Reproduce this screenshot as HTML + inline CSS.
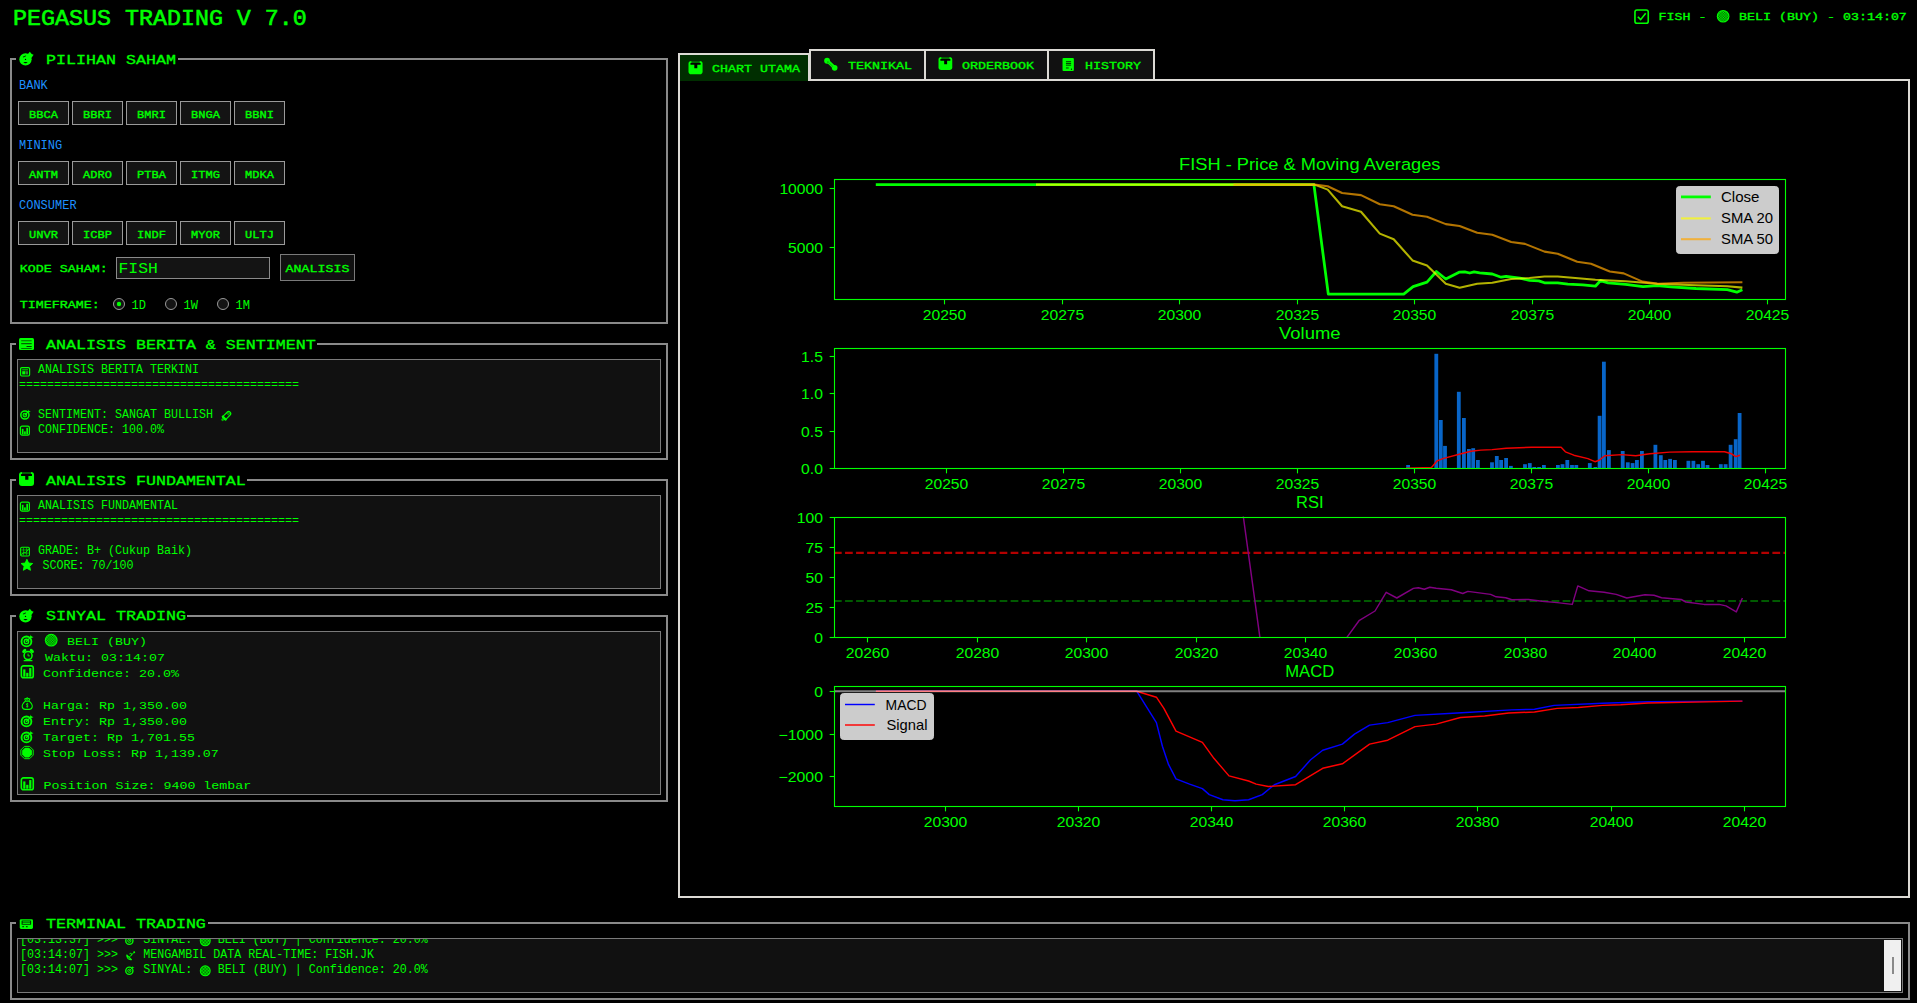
<!DOCTYPE html>
<html><head><meta charset="utf-8"><title>Pegasus Trading</title>
<style>html,body{margin:0;padding:0;background:#000;overflow:hidden}svg{display:block}</style></head>
<body><svg width="1917" height="1003" viewBox="0 0 1917 1003" shape-rendering="auto">
<defs><pattern id="hatch" width="2" height="2" patternUnits="userSpaceOnUse"><rect width="2" height="2" fill="#00ff00"/><rect width="1" height="1" fill="#006000"/><rect x="1" y="1" width="1" height="1" fill="#006000"/></pattern></defs>
<rect width="1917" height="1003" fill="#000"/>
<text x="13" y="25" font-family="'Liberation Mono', monospace" font-size="23.33" font-weight="normal" fill="#00ff00" xml:space="preserve" transform="translate(0 25) scale(1 0.93) translate(0 -25)"  stroke="#00ff00" stroke-width="0.6">PEGASUS TRADING V 7.0</text>
<g transform="translate(1634.00,9.00) scale(0.950)"><rect x="1" y="1" width="14" height="14" rx="2.2" fill="none" stroke="#00ff00" stroke-width="1.7"/><path d="M4 8.2 L7 11.2 L12.3 4.5" fill="none" stroke="#00ff00" stroke-width="1.7"/></g>
<text x="1658.5" y="20.5" font-family="'Liberation Mono', monospace" font-size="13.33" font-weight="normal" fill="#00ff00" xml:space="preserve" transform="translate(0 20.5) scale(1 0.88) translate(0 -20.5)"  stroke="#00ff00" stroke-width="0.4">FISH -</text>
<g transform="translate(1716.50,9.60) scale(0.830)"><circle cx="8" cy="8" r="7.6" fill="#00ff00"/><circle cx="8" cy="8" r="6.4" fill="url(#hatch)"/></g>
<text x="1739" y="20.5" font-family="'Liberation Mono', monospace" font-size="13.33" font-weight="normal" fill="#00ff00" xml:space="preserve" transform="translate(0 20.5) scale(1 0.88) translate(0 -20.5)"  stroke="#00ff00" stroke-width="0.4">BELI (BUY) - 03:14:07</text>
<rect x="10" y="58" width="658" height="2" fill="#8a8a8a"/>
<rect x="10" y="322" width="658" height="2" fill="#8a8a8a"/>
<rect x="10" y="58" width="2" height="266" fill="#8a8a8a"/>
<rect x="666" y="58" width="2" height="266" fill="#8a8a8a"/>
<rect x="16" y="57" width="162" height="4" fill="#000"/>
<g transform="translate(18.80,50.50) scale(0.950)"><circle cx="7.05" cy="9.3" r="6.5" fill="#00ff00"/><ellipse cx="6.0" cy="6.3" rx="1.9" ry="0.65" transform="rotate(-20 6 6.3)" fill="#003a00"/><ellipse cx="7.05" cy="12.7" rx="2.1" ry="0.6" fill="#000"/><circle cx="7.05" cy="9.4" r="0.7" fill="#000"/><polygon points="9.2,4.2 11.6,1.3 13.6,3.6 15.6,4.6 13.4,7.6 10.4,7.4" fill="#00ff00"/></g>
<text x="46" y="64" font-family="'Liberation Mono', monospace" font-size="16.67" font-weight="normal" fill="#00ff00" xml:space="preserve" transform="translate(0 64) scale(1 0.8) translate(0 -64)"  stroke="#00ff00" stroke-width="0.4">PILIHAN SAHAM</text>
<text x="19" y="89" font-family="'Liberation Mono', monospace" font-size="12" font-weight="normal" fill="#1e90ff" xml:space="preserve" >BANK</text>
<rect x="18" y="101" width="51" height="24" fill="#141414"/>
<rect x="18" y="101" width="51" height="1" fill="#9a9a9a"/>
<rect x="18" y="124" width="51" height="1" fill="#9a9a9a"/>
<rect x="18" y="101" width="1" height="24" fill="#9a9a9a"/>
<rect x="68" y="101" width="1" height="24" fill="#9a9a9a"/>
<text x="43.5" y="118" font-family="'Liberation Mono', monospace" font-size="12" font-weight="normal" fill="#00ff00" xml:space="preserve" transform="translate(0 118) scale(1 0.92) translate(0 -118)" text-anchor="middle" stroke="#00ff00" stroke-width="0.4">BBCA</text>
<rect x="72" y="101" width="51" height="24" fill="#141414"/>
<rect x="72" y="101" width="51" height="1" fill="#9a9a9a"/>
<rect x="72" y="124" width="51" height="1" fill="#9a9a9a"/>
<rect x="72" y="101" width="1" height="24" fill="#9a9a9a"/>
<rect x="122" y="101" width="1" height="24" fill="#9a9a9a"/>
<text x="97.5" y="118" font-family="'Liberation Mono', monospace" font-size="12" font-weight="normal" fill="#00ff00" xml:space="preserve" transform="translate(0 118) scale(1 0.92) translate(0 -118)" text-anchor="middle" stroke="#00ff00" stroke-width="0.4">BBRI</text>
<rect x="126" y="101" width="51" height="24" fill="#141414"/>
<rect x="126" y="101" width="51" height="1" fill="#9a9a9a"/>
<rect x="126" y="124" width="51" height="1" fill="#9a9a9a"/>
<rect x="126" y="101" width="1" height="24" fill="#9a9a9a"/>
<rect x="176" y="101" width="1" height="24" fill="#9a9a9a"/>
<text x="151.5" y="118" font-family="'Liberation Mono', monospace" font-size="12" font-weight="normal" fill="#00ff00" xml:space="preserve" transform="translate(0 118) scale(1 0.92) translate(0 -118)" text-anchor="middle" stroke="#00ff00" stroke-width="0.4">BMRI</text>
<rect x="180" y="101" width="51" height="24" fill="#141414"/>
<rect x="180" y="101" width="51" height="1" fill="#9a9a9a"/>
<rect x="180" y="124" width="51" height="1" fill="#9a9a9a"/>
<rect x="180" y="101" width="1" height="24" fill="#9a9a9a"/>
<rect x="230" y="101" width="1" height="24" fill="#9a9a9a"/>
<text x="205.5" y="118" font-family="'Liberation Mono', monospace" font-size="12" font-weight="normal" fill="#00ff00" xml:space="preserve" transform="translate(0 118) scale(1 0.92) translate(0 -118)" text-anchor="middle" stroke="#00ff00" stroke-width="0.4">BNGA</text>
<rect x="234" y="101" width="51" height="24" fill="#141414"/>
<rect x="234" y="101" width="51" height="1" fill="#9a9a9a"/>
<rect x="234" y="124" width="51" height="1" fill="#9a9a9a"/>
<rect x="234" y="101" width="1" height="24" fill="#9a9a9a"/>
<rect x="284" y="101" width="1" height="24" fill="#9a9a9a"/>
<text x="259.5" y="118" font-family="'Liberation Mono', monospace" font-size="12" font-weight="normal" fill="#00ff00" xml:space="preserve" transform="translate(0 118) scale(1 0.92) translate(0 -118)" text-anchor="middle" stroke="#00ff00" stroke-width="0.4">BBNI</text>
<text x="19" y="149" font-family="'Liberation Mono', monospace" font-size="12" font-weight="normal" fill="#1e90ff" xml:space="preserve" >MINING</text>
<rect x="18" y="161" width="51" height="24" fill="#141414"/>
<rect x="18" y="161" width="51" height="1" fill="#9a9a9a"/>
<rect x="18" y="184" width="51" height="1" fill="#9a9a9a"/>
<rect x="18" y="161" width="1" height="24" fill="#9a9a9a"/>
<rect x="68" y="161" width="1" height="24" fill="#9a9a9a"/>
<text x="43.5" y="178" font-family="'Liberation Mono', monospace" font-size="12" font-weight="normal" fill="#00ff00" xml:space="preserve" transform="translate(0 178) scale(1 0.92) translate(0 -178)" text-anchor="middle" stroke="#00ff00" stroke-width="0.4">ANTM</text>
<rect x="72" y="161" width="51" height="24" fill="#141414"/>
<rect x="72" y="161" width="51" height="1" fill="#9a9a9a"/>
<rect x="72" y="184" width="51" height="1" fill="#9a9a9a"/>
<rect x="72" y="161" width="1" height="24" fill="#9a9a9a"/>
<rect x="122" y="161" width="1" height="24" fill="#9a9a9a"/>
<text x="97.5" y="178" font-family="'Liberation Mono', monospace" font-size="12" font-weight="normal" fill="#00ff00" xml:space="preserve" transform="translate(0 178) scale(1 0.92) translate(0 -178)" text-anchor="middle" stroke="#00ff00" stroke-width="0.4">ADRO</text>
<rect x="126" y="161" width="51" height="24" fill="#141414"/>
<rect x="126" y="161" width="51" height="1" fill="#9a9a9a"/>
<rect x="126" y="184" width="51" height="1" fill="#9a9a9a"/>
<rect x="126" y="161" width="1" height="24" fill="#9a9a9a"/>
<rect x="176" y="161" width="1" height="24" fill="#9a9a9a"/>
<text x="151.5" y="178" font-family="'Liberation Mono', monospace" font-size="12" font-weight="normal" fill="#00ff00" xml:space="preserve" transform="translate(0 178) scale(1 0.92) translate(0 -178)" text-anchor="middle" stroke="#00ff00" stroke-width="0.4">PTBA</text>
<rect x="180" y="161" width="51" height="24" fill="#141414"/>
<rect x="180" y="161" width="51" height="1" fill="#9a9a9a"/>
<rect x="180" y="184" width="51" height="1" fill="#9a9a9a"/>
<rect x="180" y="161" width="1" height="24" fill="#9a9a9a"/>
<rect x="230" y="161" width="1" height="24" fill="#9a9a9a"/>
<text x="205.5" y="178" font-family="'Liberation Mono', monospace" font-size="12" font-weight="normal" fill="#00ff00" xml:space="preserve" transform="translate(0 178) scale(1 0.92) translate(0 -178)" text-anchor="middle" stroke="#00ff00" stroke-width="0.4">ITMG</text>
<rect x="234" y="161" width="51" height="24" fill="#141414"/>
<rect x="234" y="161" width="51" height="1" fill="#9a9a9a"/>
<rect x="234" y="184" width="51" height="1" fill="#9a9a9a"/>
<rect x="234" y="161" width="1" height="24" fill="#9a9a9a"/>
<rect x="284" y="161" width="1" height="24" fill="#9a9a9a"/>
<text x="259.5" y="178" font-family="'Liberation Mono', monospace" font-size="12" font-weight="normal" fill="#00ff00" xml:space="preserve" transform="translate(0 178) scale(1 0.92) translate(0 -178)" text-anchor="middle" stroke="#00ff00" stroke-width="0.4">MDKA</text>
<text x="19" y="209" font-family="'Liberation Mono', monospace" font-size="12" font-weight="normal" fill="#1e90ff" xml:space="preserve" >CONSUMER</text>
<rect x="18" y="221" width="51" height="24" fill="#141414"/>
<rect x="18" y="221" width="51" height="1" fill="#9a9a9a"/>
<rect x="18" y="244" width="51" height="1" fill="#9a9a9a"/>
<rect x="18" y="221" width="1" height="24" fill="#9a9a9a"/>
<rect x="68" y="221" width="1" height="24" fill="#9a9a9a"/>
<text x="43.5" y="238" font-family="'Liberation Mono', monospace" font-size="12" font-weight="normal" fill="#00ff00" xml:space="preserve" transform="translate(0 238) scale(1 0.92) translate(0 -238)" text-anchor="middle" stroke="#00ff00" stroke-width="0.4">UNVR</text>
<rect x="72" y="221" width="51" height="24" fill="#141414"/>
<rect x="72" y="221" width="51" height="1" fill="#9a9a9a"/>
<rect x="72" y="244" width="51" height="1" fill="#9a9a9a"/>
<rect x="72" y="221" width="1" height="24" fill="#9a9a9a"/>
<rect x="122" y="221" width="1" height="24" fill="#9a9a9a"/>
<text x="97.5" y="238" font-family="'Liberation Mono', monospace" font-size="12" font-weight="normal" fill="#00ff00" xml:space="preserve" transform="translate(0 238) scale(1 0.92) translate(0 -238)" text-anchor="middle" stroke="#00ff00" stroke-width="0.4">ICBP</text>
<rect x="126" y="221" width="51" height="24" fill="#141414"/>
<rect x="126" y="221" width="51" height="1" fill="#9a9a9a"/>
<rect x="126" y="244" width="51" height="1" fill="#9a9a9a"/>
<rect x="126" y="221" width="1" height="24" fill="#9a9a9a"/>
<rect x="176" y="221" width="1" height="24" fill="#9a9a9a"/>
<text x="151.5" y="238" font-family="'Liberation Mono', monospace" font-size="12" font-weight="normal" fill="#00ff00" xml:space="preserve" transform="translate(0 238) scale(1 0.92) translate(0 -238)" text-anchor="middle" stroke="#00ff00" stroke-width="0.4">INDF</text>
<rect x="180" y="221" width="51" height="24" fill="#141414"/>
<rect x="180" y="221" width="51" height="1" fill="#9a9a9a"/>
<rect x="180" y="244" width="51" height="1" fill="#9a9a9a"/>
<rect x="180" y="221" width="1" height="24" fill="#9a9a9a"/>
<rect x="230" y="221" width="1" height="24" fill="#9a9a9a"/>
<text x="205.5" y="238" font-family="'Liberation Mono', monospace" font-size="12" font-weight="normal" fill="#00ff00" xml:space="preserve" transform="translate(0 238) scale(1 0.92) translate(0 -238)" text-anchor="middle" stroke="#00ff00" stroke-width="0.4">MYOR</text>
<rect x="234" y="221" width="51" height="24" fill="#141414"/>
<rect x="234" y="221" width="51" height="1" fill="#9a9a9a"/>
<rect x="234" y="244" width="51" height="1" fill="#9a9a9a"/>
<rect x="234" y="221" width="1" height="24" fill="#9a9a9a"/>
<rect x="284" y="221" width="1" height="24" fill="#9a9a9a"/>
<text x="259.5" y="238" font-family="'Liberation Mono', monospace" font-size="12" font-weight="normal" fill="#00ff00" xml:space="preserve" transform="translate(0 238) scale(1 0.92) translate(0 -238)" text-anchor="middle" stroke="#00ff00" stroke-width="0.4">ULTJ</text>
<text x="19.7" y="272" font-family="'Liberation Mono', monospace" font-size="13.33" font-weight="normal" fill="#00ff00" xml:space="preserve" transform="translate(0 272) scale(1 0.88) translate(0 -272)"  stroke="#00ff00" stroke-width="0.4">KODE SAHAM:</text>
<rect x="116" y="257" width="154" height="22" fill="#141414"/>
<rect x="116" y="257" width="154" height="1" fill="#8a8a8a"/>
<rect x="116" y="278" width="154" height="1" fill="#8a8a8a"/>
<rect x="116" y="257" width="1" height="22" fill="#8a8a8a"/>
<rect x="269" y="257" width="1" height="22" fill="#8a8a8a"/>
<text x="118.5" y="273" font-family="'Liberation Mono', monospace" font-size="16.4" font-weight="normal" fill="#00ff00" xml:space="preserve" transform="translate(0 273) scale(1 0.86) translate(0 -273)" >FISH</text>
<rect x="280" y="254" width="75" height="27" fill="#111"/>
<rect x="280" y="254" width="75" height="1" fill="#7a7a7a"/>
<rect x="280" y="280" width="75" height="1" fill="#7a7a7a"/>
<rect x="280" y="254" width="1" height="27" fill="#7a7a7a"/>
<rect x="354" y="254" width="1" height="27" fill="#7a7a7a"/>
<text x="285.5" y="272" font-family="'Liberation Mono', monospace" font-size="13.33" font-weight="normal" fill="#00ff00" xml:space="preserve" transform="translate(0 272) scale(1 0.88) translate(0 -272)"  stroke="#00ff00" stroke-width="0.4">ANALISIS</text>
<text x="19.7" y="308" font-family="'Liberation Mono', monospace" font-size="13.33" font-weight="normal" fill="#00ff00" xml:space="preserve" transform="translate(0 308) scale(1 0.88) translate(0 -308)"  stroke="#00ff00" stroke-width="0.4">TIMEFRAME:</text>
<circle cx="119.0" cy="304" r="5.5" fill="#141414" stroke="#9a9a9a" stroke-width="1"/>
<circle cx="119.0" cy="304" r="2.2" fill="#00ff00"/>
<text x="131.5" y="309" font-family="'Liberation Mono', monospace" font-size="12" font-weight="normal" fill="#00ff00" xml:space="preserve" >1D</text>
<circle cx="171.0" cy="304" r="5.5" fill="#141414" stroke="#9a9a9a" stroke-width="1"/>
<text x="183.5" y="309" font-family="'Liberation Mono', monospace" font-size="12" font-weight="normal" fill="#00ff00" xml:space="preserve" >1W</text>
<circle cx="223.0" cy="304" r="5.5" fill="#141414" stroke="#9a9a9a" stroke-width="1"/>
<text x="235.5" y="309" font-family="'Liberation Mono', monospace" font-size="12" font-weight="normal" fill="#00ff00" xml:space="preserve" >1M</text>
<rect x="10" y="343" width="658" height="2" fill="#8a8a8a"/>
<rect x="10" y="458" width="658" height="2" fill="#8a8a8a"/>
<rect x="10" y="343" width="2" height="117" fill="#8a8a8a"/>
<rect x="666" y="343" width="2" height="117" fill="#8a8a8a"/>
<rect x="16" y="342" width="301" height="4" fill="#000"/>
<g transform="translate(19.00,338.00) scale(1.000)"><rect x="0" y="0" width="15" height="12" rx="1.5" fill="#00ff00"/><rect x="2.2" y="2.2" width="10.5" height="1.1" fill="#007000"/><rect x="2.2" y="5.2" width="10.5" height="1.0" fill="#003800"/><rect x="7.5" y="8.0" width="5.2" height="1.0" fill="#003800"/><rect x="2.2" y="10" width="10.5" height="0.8" fill="#005000"/></g>
<text x="46" y="349" font-family="'Liberation Mono', monospace" font-size="16.67" font-weight="normal" fill="#00ff00" xml:space="preserve" transform="translate(0 349) scale(1 0.8) translate(0 -349)"  stroke="#00ff00" stroke-width="0.4">ANALISIS BERITA &amp; SENTIMENT</text>
<rect x="17" y="359" width="644" height="94" fill="#111"/>
<rect x="17" y="359" width="644" height="1" fill="#7a7a7a"/>
<rect x="17" y="452" width="644" height="1" fill="#7a7a7a"/>
<rect x="17" y="359" width="1" height="94" fill="#7a7a7a"/>
<rect x="660" y="359" width="1" height="94" fill="#7a7a7a"/>
<g transform="translate(20.00,367.00) scale(1.000)"><rect x="0.6" y="0.6" width="9" height="8.4" rx="1.2" fill="none" stroke="#00ff00" stroke-width="1.2"/><rect x="2.2" y="2.4" width="5.8" height="0.9" fill="#00ff00"/><rect x="2.2" y="4.2" width="3.2" height="3.2" fill="#00ff00"/><rect x="5.8" y="4.2" width="2.2" height="3.2" fill="#3a7a3a"/></g>
<text x="38" y="373" font-family="'Liberation Mono', monospace" font-size="11.67" font-weight="normal" fill="#00ff00" xml:space="preserve" transform="translate(0 373) scale(1 1.06) translate(0 -373)" >ANALISIS BERITA TERKINI</text>
<text x="19" y="388" font-family="'Liberation Mono', monospace" font-size="11.67" font-weight="normal" fill="#00ff00" xml:space="preserve" transform="translate(0 388) scale(1 1.06) translate(0 -388)" >========================================</text>
<g transform="translate(20.00,408.50) scale(0.700)"><circle cx="7" cy="9.3" r="5.8" fill="none" stroke="#00ff00" stroke-width="2.2"/><circle cx="7" cy="9.3" r="2.6" fill="none" stroke="#00ff00" stroke-width="1.6"/><circle cx="7" cy="9.3" r="0.9" fill="#00ff00"/><path d="M7 9.3 L13 3.3" stroke="#00ff00" stroke-width="1.6"/><path d="M11.2 1.2 L12.6 3.6 L15.4 4.0 L13.2 5.4 L11.6 4.8 Z" fill="#00ff00"/></g>
<text x="38" y="418" font-family="'Liberation Mono', monospace" font-size="11.67" font-weight="normal" fill="#00ff00" xml:space="preserve" transform="translate(0 418) scale(1 1.06) translate(0 -418)" >SENTIMENT: SANGAT BULLISH</text>
<g transform="translate(219.50,410.00) scale(0.800)"><g transform="rotate(45 8 8)"><rect x="5.4" y="0.6" width="5.2" height="11.8" rx="2.6" fill="none" stroke="#00ff00" stroke-width="1.5"/><rect x="4.2" y="9.6" width="7.6" height="2.6" rx="0.8" fill="#00ff00"/><path d="M6 2.6 H10 M6 4.4 H10" stroke="#00ff00" stroke-width="1.1"/><rect x="6.3" y="12.4" width="3.4" height="3.0" rx="1.4" fill="#00b000"/></g></g>
<g transform="translate(19.80,425.50) scale(0.640)"><rect x="1" y="1" width="14" height="14" rx="2.5" fill="none" stroke="#00ff00" stroke-width="1.9"/><rect x="3.2" y="5.2" width="2.6" height="8.6" fill="#00ff00"/><rect x="6.7" y="9.2" width="2.6" height="4.6" fill="#00ff00"/><rect x="10.2" y="3.6" width="2.6" height="10.2" fill="#00ff00"/></g>
<text x="38" y="433" font-family="'Liberation Mono', monospace" font-size="11.67" font-weight="normal" fill="#00ff00" xml:space="preserve" transform="translate(0 433) scale(1 1.06) translate(0 -433)" >CONFIDENCE: 100.0%</text>
<rect x="10" y="479" width="658" height="2" fill="#8a8a8a"/>
<rect x="10" y="594" width="658" height="2" fill="#8a8a8a"/>
<rect x="10" y="479" width="2" height="117" fill="#8a8a8a"/>
<rect x="666" y="479" width="2" height="117" fill="#8a8a8a"/>
<rect x="16" y="478" width="231" height="4" fill="#000"/>
<g transform="translate(19.00,472.00) scale(0.940)"><rect x="0" y="0" width="16" height="15" rx="3.2" fill="#00ff00"/><rect x="3.2" y="0" width="9.6" height="2.2" fill="#006000"/><path d="M2.2 2.2 H13.8 V4.3 H10 V8.3 H6.6 V4.3 H2.2 Z" fill="#000"/></g>
<text x="46" y="485" font-family="'Liberation Mono', monospace" font-size="16.67" font-weight="normal" fill="#00ff00" xml:space="preserve" transform="translate(0 485) scale(1 0.8) translate(0 -485)"  stroke="#00ff00" stroke-width="0.4">ANALISIS FUNDAMENTAL</text>
<rect x="17" y="495" width="644" height="94" fill="#111"/>
<rect x="17" y="495" width="644" height="1" fill="#7a7a7a"/>
<rect x="17" y="588" width="644" height="1" fill="#7a7a7a"/>
<rect x="17" y="495" width="1" height="94" fill="#7a7a7a"/>
<rect x="660" y="495" width="1" height="94" fill="#7a7a7a"/>
<g transform="translate(19.80,501.50) scale(0.640)"><rect x="1" y="1" width="14" height="14" rx="2.5" fill="none" stroke="#00ff00" stroke-width="1.9"/><rect x="3.2" y="5.2" width="2.6" height="8.6" fill="#00ff00"/><rect x="6.7" y="9.2" width="2.6" height="4.6" fill="#00ff00"/><rect x="10.2" y="3.6" width="2.6" height="10.2" fill="#00ff00"/></g>
<text x="38" y="509" font-family="'Liberation Mono', monospace" font-size="11.67" font-weight="normal" fill="#00ff00" xml:space="preserve" transform="translate(0 509) scale(1 1.06) translate(0 -509)" >ANALISIS FUNDAMENTAL</text>
<text x="19" y="524" font-family="'Liberation Mono', monospace" font-size="11.67" font-weight="normal" fill="#00ff00" xml:space="preserve" transform="translate(0 524) scale(1 1.06) translate(0 -524)" >========================================</text>
<g transform="translate(20.00,546.50) scale(0.630)"><rect x="1" y="1" width="14" height="14" rx="2" fill="none" stroke="#00ff00" stroke-width="1.6"/><path d="M5.5 2 V14 M10.5 2 V14 M2 5.5 H14 M2 10.5 H14" stroke="#00ff00" stroke-width="0.9"/><path d="M1.5 14 L6.5 9 L9 10 L14.5 3" stroke="#00ff00" stroke-width="1.4" fill="none"/></g>
<text x="38" y="554" font-family="'Liberation Mono', monospace" font-size="11.67" font-weight="normal" fill="#00ff00" xml:space="preserve" transform="translate(0 554) scale(1 1.06) translate(0 -554)" >GRADE: B+ (Cukup Baik)</text>
<g transform="translate(20.50,558.50) scale(0.800)"><polygon points="8.00,1.00 10.12,5.69 15.23,6.25 11.42,9.71 12.47,14.75 8.00,12.20 3.53,14.75 4.58,9.71 0.77,6.25 5.88,5.69" fill="#00ff00" stroke="#00ff00" stroke-width="1.2" stroke-linejoin="round"/></g>
<text x="42.5" y="569" font-family="'Liberation Mono', monospace" font-size="11.67" font-weight="normal" fill="#00ff00" xml:space="preserve" transform="translate(0 569) scale(1 1.06) translate(0 -569)" >SCORE: 70/100</text>
<rect x="10" y="615" width="658" height="2" fill="#8a8a8a"/>
<rect x="10" y="800" width="658" height="2" fill="#8a8a8a"/>
<rect x="10" y="615" width="2" height="187" fill="#8a8a8a"/>
<rect x="666" y="615" width="2" height="187" fill="#8a8a8a"/>
<rect x="16" y="614" width="171" height="4" fill="#000"/>
<g transform="translate(18.80,607.50) scale(0.950)"><circle cx="7.05" cy="9.3" r="6.5" fill="#00ff00"/><ellipse cx="6.0" cy="6.3" rx="1.9" ry="0.65" transform="rotate(-20 6 6.3)" fill="#003a00"/><ellipse cx="7.05" cy="12.7" rx="2.1" ry="0.6" fill="#000"/><circle cx="7.05" cy="9.4" r="0.7" fill="#000"/><polygon points="9.2,4.2 11.6,1.3 13.6,3.6 15.6,4.6 13.4,7.6 10.4,7.4" fill="#00ff00"/></g>
<text x="46" y="620" font-family="'Liberation Mono', monospace" font-size="16.67" font-weight="normal" fill="#00ff00" xml:space="preserve" transform="translate(0 620) scale(1 0.8) translate(0 -620)"  stroke="#00ff00" stroke-width="0.4">SINYAL TRADING</text>
<rect x="17" y="631" width="644" height="164" fill="#111"/>
<rect x="17" y="631" width="644" height="1" fill="#7a7a7a"/>
<rect x="17" y="794" width="644" height="1" fill="#7a7a7a"/>
<rect x="17" y="631" width="1" height="164" fill="#7a7a7a"/>
<rect x="660" y="631" width="1" height="164" fill="#7a7a7a"/>
<g transform="translate(20.50,633.50) scale(0.850)"><circle cx="7" cy="9.3" r="5.8" fill="none" stroke="#00ff00" stroke-width="2.2"/><circle cx="7" cy="9.3" r="2.6" fill="none" stroke="#00ff00" stroke-width="1.6"/><circle cx="7" cy="9.3" r="0.9" fill="#00ff00"/><path d="M7 9.3 L13 3.3" stroke="#00ff00" stroke-width="1.6"/><path d="M11.2 1.2 L12.6 3.6 L15.4 4.0 L13.2 5.4 L11.6 4.8 Z" fill="#00ff00"/></g>
<g transform="translate(44.50,633.50) scale(0.840)"><circle cx="8" cy="8" r="7.6" fill="#00ff00"/><circle cx="8" cy="8" r="6.4" fill="url(#hatch)"/></g>
<text x="67" y="645" font-family="'Liberation Mono', monospace" font-size="13.33" font-weight="normal" fill="#00ff00" xml:space="preserve" transform="translate(0 645) scale(1 0.88) translate(0 -645)" >BELI (BUY)</text>
<g transform="translate(21.50,648.50) scale(0.820)"><circle cx="8" cy="8.6" r="4.9" fill="none" stroke="#00ff00" stroke-width="1.9"/><path d="M8 6.2 V9 H10.2" stroke="#00ff00" stroke-width="1.1" fill="none"/><ellipse cx="3.4" cy="2.9" rx="2.9" ry="1.9" transform="rotate(-40 3.4 2.9)" fill="#00ff00"/><ellipse cx="12.6" cy="2.9" rx="2.9" ry="1.9" transform="rotate(40 12.6 2.9)" fill="#00ff00"/><path d="M2.6 15.6 H13.4 V14.2 Q8 12.4 2.6 14.2 Z" fill="#00ff00"/></g>
<text x="45" y="661" font-family="'Liberation Mono', monospace" font-size="13.33" font-weight="normal" fill="#00ff00" xml:space="preserve" transform="translate(0 661) scale(1 0.88) translate(0 -661)" >Waktu: 03:14:07</text>
<g transform="translate(20.50,665.00) scale(0.850)"><rect x="1" y="1" width="14" height="14" rx="2.5" fill="none" stroke="#00ff00" stroke-width="1.9"/><rect x="3.2" y="5.2" width="2.6" height="8.6" fill="#00ff00"/><rect x="6.7" y="9.2" width="2.6" height="4.6" fill="#00ff00"/><rect x="10.2" y="3.6" width="2.6" height="10.2" fill="#00ff00"/></g>
<text x="43" y="677" font-family="'Liberation Mono', monospace" font-size="13.33" font-weight="normal" fill="#00ff00" xml:space="preserve" transform="translate(0 677) scale(1 0.88) translate(0 -677)" >Confidence: 20.0%</text>
<g transform="translate(21.00,697.50) scale(0.780)"><path d="M5.6 4.6 Q1 8.5 1.6 12 Q2.2 15.2 5.5 15.2 H10.5 Q13.8 15.2 14.4 12 Q15 8.5 10.4 4.6 Z" fill="none" stroke="#00ff00" stroke-width="1.4"/><path d="M5.8 4.2 L4.8 1.8 Q8 0.2 11.2 1.8 L10.2 4.2" fill="none" stroke="#00ff00" stroke-width="1.3"/><circle cx="8" cy="1.6" r="1.3" fill="none" stroke="#00ff00" stroke-width="1"/><path d="M9.4 8.3 Q8 7.3 7 8.3 Q6.5 9.5 8 10 Q9.5 10.5 9 11.6 Q8 12.6 6.6 11.6 M8 6.8 V13" stroke="#00ff00" stroke-width="1" fill="none"/></g>
<text x="43" y="709" font-family="'Liberation Mono', monospace" font-size="13.33" font-weight="normal" fill="#00ff00" xml:space="preserve" transform="translate(0 709) scale(1 0.88) translate(0 -709)" >Harga: Rp 1,350.00</text>
<g transform="translate(20.50,713.50) scale(0.850)"><circle cx="7" cy="9.3" r="5.8" fill="none" stroke="#00ff00" stroke-width="2.2"/><circle cx="7" cy="9.3" r="2.6" fill="none" stroke="#00ff00" stroke-width="1.6"/><circle cx="7" cy="9.3" r="0.9" fill="#00ff00"/><path d="M7 9.3 L13 3.3" stroke="#00ff00" stroke-width="1.6"/><path d="M11.2 1.2 L12.6 3.6 L15.4 4.0 L13.2 5.4 L11.6 4.8 Z" fill="#00ff00"/></g>
<text x="43" y="725" font-family="'Liberation Mono', monospace" font-size="13.33" font-weight="normal" fill="#00ff00" xml:space="preserve" transform="translate(0 725) scale(1 0.88) translate(0 -725)" >Entry: Rp 1,350.00</text>
<g transform="translate(20.50,729.50) scale(0.850)"><circle cx="7" cy="9.3" r="5.8" fill="none" stroke="#00ff00" stroke-width="2.2"/><circle cx="7" cy="9.3" r="2.6" fill="none" stroke="#00ff00" stroke-width="1.6"/><circle cx="7" cy="9.3" r="0.9" fill="#00ff00"/><path d="M7 9.3 L13 3.3" stroke="#00ff00" stroke-width="1.6"/><path d="M11.2 1.2 L12.6 3.6 L15.4 4.0 L13.2 5.4 L11.6 4.8 Z" fill="#00ff00"/></g>
<text x="43" y="741" font-family="'Liberation Mono', monospace" font-size="13.33" font-weight="normal" fill="#00ff00" xml:space="preserve" transform="translate(0 741) scale(1 0.88) translate(0 -741)" >Target: Rp 1,701.55</text>
<g transform="translate(20.00,745.50) scale(0.880)"><polygon points="15.02,10.91 10.91,15.02 5.09,15.02 0.98,10.91 0.98,5.09 5.09,0.98 10.91,0.98 15.02,5.09" fill="none" stroke="#00ff00" stroke-width="1.1"/><polygon points="13.54,10.30 10.30,13.54 5.70,13.54 2.46,10.30 2.46,5.70 5.70,2.46 10.30,2.46 13.54,5.70" fill="#00ff00"/></g>
<text x="43" y="757" font-family="'Liberation Mono', monospace" font-size="13.33" font-weight="normal" fill="#00ff00" xml:space="preserve" transform="translate(0 757) scale(1 0.88) translate(0 -757)" >Stop Loss: Rp 1,139.07</text>
<g transform="translate(20.50,777.00) scale(0.850)"><rect x="1" y="1" width="14" height="14" rx="2.5" fill="none" stroke="#00ff00" stroke-width="1.9"/><rect x="3.2" y="5.2" width="2.6" height="8.6" fill="#00ff00"/><rect x="6.7" y="9.2" width="2.6" height="4.6" fill="#00ff00"/><rect x="10.2" y="3.6" width="2.6" height="10.2" fill="#00ff00"/></g>
<text x="43.5" y="789" font-family="'Liberation Mono', monospace" font-size="13.33" font-weight="normal" fill="#00ff00" xml:space="preserve" transform="translate(0 789) scale(1 0.88) translate(0 -789)" >Position Size: 9400 lembar</text>
<rect x="10" y="922" width="1900" height="2" fill="#8a8a8a"/>
<rect x="10" y="998" width="1900" height="2" fill="#8a8a8a"/>
<rect x="10" y="922" width="2" height="78" fill="#8a8a8a"/>
<rect x="1908" y="922" width="2" height="78" fill="#8a8a8a"/>
<rect x="16" y="921" width="192" height="4" fill="#000"/>
<g transform="translate(19.00,918.50) scale(0.920)"><rect x="0.8" y="0.8" width="14.4" height="10.6" rx="1.5" fill="#00ff00"/><rect x="2.8" y="2.2" width="10.4" height="4.6" rx="0.6" fill="#003000"/><rect x="4" y="3.2" width="8" height="1.0" fill="#00ff00"/><rect x="4" y="4.8" width="8" height="1.0" fill="#00ff00"/><ellipse cx="4.5" cy="8.9" rx="1.1" ry="0.7" fill="#003000"/><ellipse cx="8.5" cy="8.9" rx="1.1" ry="0.7" fill="#003000"/></g>
<text x="46" y="928" font-family="'Liberation Mono', monospace" font-size="16.67" font-weight="normal" fill="#00ff00" xml:space="preserve" transform="translate(0 928) scale(1 0.8) translate(0 -928)"  stroke="#00ff00" stroke-width="0.4">TERMINAL TRADING</text>
<rect x="17" y="938" width="1886" height="55" fill="#111"/>
<rect x="17" y="938" width="1886" height="1" fill="#7a7a7a"/>
<rect x="17" y="992" width="1886" height="1" fill="#7a7a7a"/>
<rect x="17" y="938" width="1" height="55" fill="#7a7a7a"/>
<rect x="1902" y="938" width="1" height="55" fill="#7a7a7a"/>
<clipPath id="termclip"><rect x="18" y="939" width="1865" height="53"/></clipPath>
<g clip-path="url(#termclip)">
<text x="20" y="943.5" font-family="'Liberation Mono', monospace" font-size="11.67" font-weight="normal" fill="#00ff00" xml:space="preserve" transform="translate(0 943.5) scale(1 1.06) translate(0 -943.5)" >[03:13:37] &gt;&gt;&gt;</text>
<g transform="translate(125.00,935.00) scale(0.620)"><circle cx="7" cy="9.3" r="5.8" fill="none" stroke="#00ff00" stroke-width="2.2"/><circle cx="7" cy="9.3" r="2.6" fill="none" stroke="#00ff00" stroke-width="1.6"/><circle cx="7" cy="9.3" r="0.9" fill="#00ff00"/><path d="M7 9.3 L13 3.3" stroke="#00ff00" stroke-width="1.6"/><path d="M11.2 1.2 L12.6 3.6 L15.4 4.0 L13.2 5.4 L11.6 4.8 Z" fill="#00ff00"/></g>
<text x="143.2" y="943.5" font-family="'Liberation Mono', monospace" font-size="11.67" font-weight="normal" fill="#00ff00" xml:space="preserve" transform="translate(0 943.5) scale(1 1.06) translate(0 -943.5)" >SINYAL:</text>
<g transform="translate(199.50,935.00) scale(0.720)"><circle cx="8" cy="8" r="7.6" fill="#00ff00"/><circle cx="8" cy="8" r="6.4" fill="url(#hatch)"/></g>
<text x="217.8" y="943.5" font-family="'Liberation Mono', monospace" font-size="11.67" font-weight="normal" fill="#00ff00" xml:space="preserve" transform="translate(0 943.5) scale(1 1.06) translate(0 -943.5)" >BELI (BUY) | Confidence: 20.0%</text>
<text x="20" y="958.5" font-family="'Liberation Mono', monospace" font-size="11.67" font-weight="normal" fill="#00ff00" xml:space="preserve" transform="translate(0 958.5) scale(1 1.06) translate(0 -958.5)" >[03:14:07] &gt;&gt;&gt;</text>
<g transform="translate(126.00,950.50) scale(0.620)"><path d="M1.2 7.2 L8.8 14.8 Q1.5 15.5 1.2 7.2 Z" fill="none" stroke="#00ff00" stroke-width="1.8" stroke-linejoin="round"/><path d="M4.5 11.5 L12.5 3.5" stroke="#00ff00" stroke-width="1.5"/><path d="M5.5 5.5 L8 4.2 L9.5 7 L7.8 8.6" fill="none" stroke="#00ff00" stroke-width="1.4"/><circle cx="13.2" cy="2.8" r="1.6" fill="#00ff00"/></g>
<text x="143.2" y="958.5" font-family="'Liberation Mono', monospace" font-size="11.67" font-weight="normal" fill="#00ff00" xml:space="preserve" transform="translate(0 958.5) scale(1 1.06) translate(0 -958.5)" >MENGAMBIL DATA REAL-TIME: FISH.JK</text>
<text x="20" y="973.5" font-family="'Liberation Mono', monospace" font-size="11.67" font-weight="normal" fill="#00ff00" xml:space="preserve" transform="translate(0 973.5) scale(1 1.06) translate(0 -973.5)" >[03:14:07] &gt;&gt;&gt;</text>
<g transform="translate(125.00,965.00) scale(0.620)"><circle cx="7" cy="9.3" r="5.8" fill="none" stroke="#00ff00" stroke-width="2.2"/><circle cx="7" cy="9.3" r="2.6" fill="none" stroke="#00ff00" stroke-width="1.6"/><circle cx="7" cy="9.3" r="0.9" fill="#00ff00"/><path d="M7 9.3 L13 3.3" stroke="#00ff00" stroke-width="1.6"/><path d="M11.2 1.2 L12.6 3.6 L15.4 4.0 L13.2 5.4 L11.6 4.8 Z" fill="#00ff00"/></g>
<text x="143.2" y="973.5" font-family="'Liberation Mono', monospace" font-size="11.67" font-weight="normal" fill="#00ff00" xml:space="preserve" transform="translate(0 973.5) scale(1 1.06) translate(0 -973.5)" >SINYAL:</text>
<g transform="translate(199.50,965.00) scale(0.720)"><circle cx="8" cy="8" r="7.6" fill="#00ff00"/><circle cx="8" cy="8" r="6.4" fill="url(#hatch)"/></g>
<text x="217.8" y="973.5" font-family="'Liberation Mono', monospace" font-size="11.67" font-weight="normal" fill="#00ff00" xml:space="preserve" transform="translate(0 973.5) scale(1 1.06) translate(0 -973.5)" >BELI (BUY) | Confidence: 20.0%</text>
</g>
<rect x="1884" y="940" width="17" height="51" fill="#f0f0f0"/>
<rect x="1892" y="957" width="2" height="17" fill="#8a8a8a"/>
<rect x="678" y="79" width="1232" height="2" fill="#dcdad5"/>
<rect x="678" y="896" width="1232" height="2" fill="#dcdad5"/>
<rect x="678" y="79" width="2" height="819" fill="#dcdad5"/>
<rect x="1908" y="79" width="2" height="819" fill="#dcdad5"/>
<rect x="678" y="53" width="132" height="28" fill="#dcdad5"/>
<rect x="680" y="55" width="128" height="26" fill="#002e00"/>
<g transform="translate(688.50,61.00) scale(0.880)"><rect x="0" y="0" width="16" height="15" rx="3.2" fill="#00ff00"/><rect x="3.2" y="0" width="9.6" height="2.2" fill="#006000"/><path d="M2.2 2.2 H13.8 V4.3 H10 V8.3 H6.6 V4.3 H2.2 Z" fill="#000"/></g>
<text x="712" y="72" font-family="'Liberation Mono', monospace" font-size="13.33" font-weight="normal" fill="#00ff00" xml:space="preserve" transform="translate(0 72) scale(1 0.88) translate(0 -72)"  stroke="#00ff00" stroke-width="0.4">CHART UTAMA</text>
<rect x="809" y="49" width="117" height="32" fill="#dcdad5"/>
<rect x="811" y="51" width="113" height="28" fill="#111"/>
<rect x="924" y="49" width="125" height="32" fill="#dcdad5"/>
<rect x="926" y="51" width="121" height="28" fill="#111"/>
<rect x="1047" y="49" width="108" height="32" fill="#dcdad5"/>
<rect x="1049" y="51" width="104" height="28" fill="#111"/>
<g transform="translate(824.00,57.50) scale(0.860)"><path d="M3.8 3.8 L12.4 11.8" stroke="#00ff00" stroke-width="4.0" stroke-linecap="round"/><circle cx="3.6" cy="3.8" r="3.4" fill="#00ff00"/><circle cx="12.4" cy="12.0" r="3.3" fill="#00ff00"/><ellipse cx="4.6" cy="5.2" rx="0.9" ry="0.5" fill="#111"/><path d="M6 6.5 L10.5 10.7" stroke="#0a0a0a" stroke-width="0.6" stroke-dasharray="0.8 0.6"/></g>
<text x="848" y="69" font-family="'Liberation Mono', monospace" font-size="13.33" font-weight="normal" fill="#00ff00" xml:space="preserve" transform="translate(0 69) scale(1 0.88) translate(0 -69)"  stroke="#00ff00" stroke-width="0.4">TEKNIKAL</text>
<g transform="translate(938.50,57.00) scale(0.860)"><rect x="0" y="0" width="16" height="15" rx="3.2" fill="#00ff00"/><rect x="3.2" y="0" width="9.6" height="2.2" fill="#006000"/><path d="M2.2 2.2 H13.8 V4.3 H10 V8.3 H6.6 V4.3 H2.2 Z" fill="#000"/></g>
<text x="962" y="69" font-family="'Liberation Mono', monospace" font-size="13.33" font-weight="normal" fill="#00ff00" xml:space="preserve" transform="translate(0 69) scale(1 0.88) translate(0 -69)"  stroke="#00ff00" stroke-width="0.4">ORDERBOOK</text>
<g transform="translate(1062.00,57.50) scale(0.860)"><rect x="0.6" y="0.6" width="13.2" height="15" rx="1.2" fill="#00ff00"/><path d="M4.6 4.9 H10.6 M4.6 6.9 H10.6 M4.6 8.9 H10.6 M4.6 12.2 H7.8" stroke="#000" stroke-width="0.9"/><circle cx="11" cy="13.6" r="0.7" fill="#000"/></g>
<text x="1085" y="69" font-family="'Liberation Mono', monospace" font-size="13.33" font-weight="normal" fill="#00ff00" xml:space="preserve" transform="translate(0 69) scale(1 0.88) translate(0 -69)"  stroke="#00ff00" stroke-width="0.4">HISTORY</text>
<line x1="944.50" y1="299.50" x2="944.50" y2="304.36" stroke="#00ff00" stroke-width="1.11"/>
<text x="944.50" y="319.50" font-family="'Liberation Sans', sans-serif" font-size="14.2" fill="#00ff00" text-anchor="middle" textLength="43.60" lengthAdjust="spacingAndGlyphs">20250</text>
<line x1="1062.50" y1="299.50" x2="1062.50" y2="304.36" stroke="#00ff00" stroke-width="1.11"/>
<text x="1062.50" y="319.50" font-family="'Liberation Sans', sans-serif" font-size="14.2" fill="#00ff00" text-anchor="middle" textLength="43.60" lengthAdjust="spacingAndGlyphs">20275</text>
<line x1="1179.50" y1="299.50" x2="1179.50" y2="304.36" stroke="#00ff00" stroke-width="1.11"/>
<text x="1179.50" y="319.50" font-family="'Liberation Sans', sans-serif" font-size="14.2" fill="#00ff00" text-anchor="middle" textLength="43.60" lengthAdjust="spacingAndGlyphs">20300</text>
<line x1="1297.50" y1="299.50" x2="1297.50" y2="304.36" stroke="#00ff00" stroke-width="1.11"/>
<text x="1297.50" y="319.50" font-family="'Liberation Sans', sans-serif" font-size="14.2" fill="#00ff00" text-anchor="middle" textLength="43.60" lengthAdjust="spacingAndGlyphs">20325</text>
<line x1="1414.50" y1="299.50" x2="1414.50" y2="304.36" stroke="#00ff00" stroke-width="1.11"/>
<text x="1414.50" y="319.50" font-family="'Liberation Sans', sans-serif" font-size="14.2" fill="#00ff00" text-anchor="middle" textLength="43.60" lengthAdjust="spacingAndGlyphs">20350</text>
<line x1="1532.50" y1="299.50" x2="1532.50" y2="304.36" stroke="#00ff00" stroke-width="1.11"/>
<text x="1532.50" y="319.50" font-family="'Liberation Sans', sans-serif" font-size="14.2" fill="#00ff00" text-anchor="middle" textLength="43.60" lengthAdjust="spacingAndGlyphs">20375</text>
<line x1="1649.50" y1="299.50" x2="1649.50" y2="304.36" stroke="#00ff00" stroke-width="1.11"/>
<text x="1649.50" y="319.50" font-family="'Liberation Sans', sans-serif" font-size="14.2" fill="#00ff00" text-anchor="middle" textLength="43.60" lengthAdjust="spacingAndGlyphs">20400</text>
<line x1="1767.50" y1="299.50" x2="1767.50" y2="304.36" stroke="#00ff00" stroke-width="1.11"/>
<text x="1767.50" y="319.50" font-family="'Liberation Sans', sans-serif" font-size="14.2" fill="#00ff00" text-anchor="middle" textLength="43.60" lengthAdjust="spacingAndGlyphs">20425</text>
<line x1="829.64" y1="188.50" x2="834.50" y2="188.50" stroke="#00ff00" stroke-width="1.11"/>
<text x="823.00" y="193.50" font-family="'Liberation Sans', sans-serif" font-size="14.2" fill="#00ff00" text-anchor="end" textLength="43.60" lengthAdjust="spacingAndGlyphs">10000</text>
<line x1="829.64" y1="247.50" x2="834.50" y2="247.50" stroke="#00ff00" stroke-width="1.11"/>
<text x="823.00" y="252.50" font-family="'Liberation Sans', sans-serif" font-size="14.2" fill="#00ff00" text-anchor="end" textLength="34.88" lengthAdjust="spacingAndGlyphs">5000</text>
<text x="1309.75" y="169.90" font-family="'Liberation Sans', sans-serif" font-size="17.4" fill="#00ff00" text-anchor="middle" textLength="261.5" lengthAdjust="spacingAndGlyphs">FISH - Price &amp; Moving Averages</text>
<polyline points="875.8,184.6 1313.9,184.6 1328.3,294.1 1403.7,294.1 1413.1,286.6 1427.0,282.2 1436.4,271.5 1445.8,279.0 1459.6,272.1 1464.7,271.8 1469.7,273.0 1474.1,271.8 1479.7,272.8 1492.3,274.0 1501.1,277.2 1506.1,276.3 1520.0,278.2 1529.4,280.3 1538.8,280.9 1544.5,282.8 1557.7,282.8 1567.8,284.1 1582.8,284.9 1595.4,286.2 1600.4,280.7 1608.0,282.8 1625.6,284.3 1643.1,286.6 1657.0,285.6 1670.8,286.8 1695.9,288.5 1727.3,289.7 1736.8,292.2 1742.4,289.7" fill="none" stroke="#00ff00" stroke-width="2.78" stroke-linejoin="round" stroke-linecap="butt" />
<polyline points="1036.0,184.6 1314.5,184.6 1327.7,189.6 1342.1,206.2 1361.0,211.8 1379.8,233.6 1393.7,239.2 1412.5,260.4 1427.0,265.5 1445.8,283.8 1459.6,287.8 1477.2,283.7 1492.3,282.8 1511.2,279.0 1529.4,278.0 1544.5,276.5 1557.7,276.5 1575.3,278.0 1595.4,279.7 1625.6,281.3 1657.0,283.8 1695.9,285.3 1727.3,286.3 1742.4,287.6" fill="none" stroke="#ffff00" stroke-width="2.08" stroke-opacity="0.7" stroke-linejoin="round" stroke-linecap="butt" />
<polyline points="1233.5,184.6 1314.5,184.6 1327.7,186.3 1342.1,193.0 1361.0,195.1 1379.8,204.3 1393.7,206.2 1412.5,214.7 1427.0,216.8 1445.8,224.1 1459.6,226.0 1477.2,232.8 1492.3,234.8 1511.2,242.0 1525.0,243.9 1544.5,251.6 1557.7,253.7 1577.2,261.7 1591.0,263.7 1609.8,271.5 1623.7,273.4 1642.5,281.6 1658.2,283.8 1683.4,282.8 1742.4,282.2" fill="none" stroke="#ffa500" stroke-width="2.08" stroke-opacity="0.7" stroke-linejoin="round" stroke-linecap="butt" />
<rect x="834.50" y="179.50" width="951.00" height="120.00" fill="none" stroke="#00ff00" stroke-width="1.11"/>
<rect x="1676.5" y="186.5" width="102.0" height="67.0" rx="3" fill="#cccccc" stroke="#cccccc" stroke-width="1"/>
<line x1="1681.0" y1="196.9" x2="1710.8" y2="196.9" stroke="#00ff00" stroke-width="2.78" stroke-opacity="1"/>
<text x="1721" y="201.9" font-family="'Liberation Sans', sans-serif" font-size="14.2" fill="#000" textLength="38.5" lengthAdjust="spacingAndGlyphs">Close</text>
<line x1="1681.0" y1="218.4" x2="1710.8" y2="218.4" stroke="#ffff00" stroke-width="2.08" stroke-opacity="0.7"/>
<text x="1721" y="223.4" font-family="'Liberation Sans', sans-serif" font-size="14.2" fill="#000" textLength="52" lengthAdjust="spacingAndGlyphs">SMA 20</text>
<line x1="1681.0" y1="239.2" x2="1710.8" y2="239.2" stroke="#ffa500" stroke-width="2.08" stroke-opacity="0.7"/>
<text x="1721" y="244.2" font-family="'Liberation Sans', sans-serif" font-size="14.2" fill="#000" textLength="52" lengthAdjust="spacingAndGlyphs">SMA 50</text>
<line x1="946.50" y1="468.50" x2="946.50" y2="473.36" stroke="#00ff00" stroke-width="1.11"/>
<text x="946.50" y="488.50" font-family="'Liberation Sans', sans-serif" font-size="14.2" fill="#00ff00" text-anchor="middle" textLength="43.60" lengthAdjust="spacingAndGlyphs">20250</text>
<line x1="1063.50" y1="468.50" x2="1063.50" y2="473.36" stroke="#00ff00" stroke-width="1.11"/>
<text x="1063.50" y="488.50" font-family="'Liberation Sans', sans-serif" font-size="14.2" fill="#00ff00" text-anchor="middle" textLength="43.60" lengthAdjust="spacingAndGlyphs">20275</text>
<line x1="1180.50" y1="468.50" x2="1180.50" y2="473.36" stroke="#00ff00" stroke-width="1.11"/>
<text x="1180.50" y="488.50" font-family="'Liberation Sans', sans-serif" font-size="14.2" fill="#00ff00" text-anchor="middle" textLength="43.60" lengthAdjust="spacingAndGlyphs">20300</text>
<line x1="1297.50" y1="468.50" x2="1297.50" y2="473.36" stroke="#00ff00" stroke-width="1.11"/>
<text x="1297.50" y="488.50" font-family="'Liberation Sans', sans-serif" font-size="14.2" fill="#00ff00" text-anchor="middle" textLength="43.60" lengthAdjust="spacingAndGlyphs">20325</text>
<line x1="1414.50" y1="468.50" x2="1414.50" y2="473.36" stroke="#00ff00" stroke-width="1.11"/>
<text x="1414.50" y="488.50" font-family="'Liberation Sans', sans-serif" font-size="14.2" fill="#00ff00" text-anchor="middle" textLength="43.60" lengthAdjust="spacingAndGlyphs">20350</text>
<line x1="1531.50" y1="468.50" x2="1531.50" y2="473.36" stroke="#00ff00" stroke-width="1.11"/>
<text x="1531.50" y="488.50" font-family="'Liberation Sans', sans-serif" font-size="14.2" fill="#00ff00" text-anchor="middle" textLength="43.60" lengthAdjust="spacingAndGlyphs">20375</text>
<line x1="1648.50" y1="468.50" x2="1648.50" y2="473.36" stroke="#00ff00" stroke-width="1.11"/>
<text x="1648.50" y="488.50" font-family="'Liberation Sans', sans-serif" font-size="14.2" fill="#00ff00" text-anchor="middle" textLength="43.60" lengthAdjust="spacingAndGlyphs">20400</text>
<line x1="1765.50" y1="468.50" x2="1765.50" y2="473.36" stroke="#00ff00" stroke-width="1.11"/>
<text x="1765.50" y="488.50" font-family="'Liberation Sans', sans-serif" font-size="14.2" fill="#00ff00" text-anchor="middle" textLength="43.60" lengthAdjust="spacingAndGlyphs">20425</text>
<line x1="829.64" y1="356.50" x2="834.50" y2="356.50" stroke="#00ff00" stroke-width="1.11"/>
<text x="823.00" y="361.50" font-family="'Liberation Sans', sans-serif" font-size="14.2" fill="#00ff00" text-anchor="end" textLength="21.86" lengthAdjust="spacingAndGlyphs">1.5</text>
<line x1="829.64" y1="393.50" x2="834.50" y2="393.50" stroke="#00ff00" stroke-width="1.11"/>
<text x="823.00" y="398.50" font-family="'Liberation Sans', sans-serif" font-size="14.2" fill="#00ff00" text-anchor="end" textLength="21.86" lengthAdjust="spacingAndGlyphs">1.0</text>
<line x1="829.64" y1="431.50" x2="834.50" y2="431.50" stroke="#00ff00" stroke-width="1.11"/>
<text x="823.00" y="436.50" font-family="'Liberation Sans', sans-serif" font-size="14.2" fill="#00ff00" text-anchor="end" textLength="21.86" lengthAdjust="spacingAndGlyphs">0.5</text>
<line x1="829.64" y1="468.50" x2="834.50" y2="468.50" stroke="#00ff00" stroke-width="1.11"/>
<text x="823.00" y="473.50" font-family="'Liberation Sans', sans-serif" font-size="14.2" fill="#00ff00" text-anchor="end" textLength="21.86" lengthAdjust="spacingAndGlyphs">0.0</text>
<text x="1309.75" y="338.90" font-family="'Liberation Sans', sans-serif" font-size="17.4" fill="#00ff00" text-anchor="middle" textLength="61.5" lengthAdjust="spacingAndGlyphs">Volume</text>
<rect x="1406.2" y="465.0" width="3.8" height="3.5" fill="#0865c8"/>
<rect x="1434.4" y="353.8" width="3.8" height="114.7" fill="#0865c8"/>
<rect x="1438.9" y="420.0" width="3.8" height="48.5" fill="#0865c8"/>
<rect x="1443.1" y="445.9" width="3.8" height="22.6" fill="#0865c8"/>
<rect x="1456.9" y="391.8" width="3.8" height="76.7" fill="#0865c8"/>
<rect x="1462.0" y="418.0" width="3.8" height="50.5" fill="#0865c8"/>
<rect x="1467.0" y="449.0" width="3.8" height="19.5" fill="#0865c8"/>
<rect x="1471.3" y="448.2" width="3.8" height="20.3" fill="#0865c8"/>
<rect x="1476.0" y="460.0" width="3.8" height="8.5" fill="#0865c8"/>
<rect x="1490.1" y="462.3" width="3.8" height="6.2" fill="#0865c8"/>
<rect x="1494.9" y="456.0" width="3.8" height="12.5" fill="#0865c8"/>
<rect x="1499.2" y="460.0" width="3.8" height="8.5" fill="#0865c8"/>
<rect x="1504.2" y="458.0" width="3.8" height="10.5" fill="#0865c8"/>
<rect x="1509.0" y="465.9" width="3.8" height="2.6" fill="#0865c8"/>
<rect x="1523.1" y="464.2" width="3.8" height="4.3" fill="#0865c8"/>
<rect x="1527.9" y="463.1" width="3.8" height="5.4" fill="#0865c8"/>
<rect x="1532.4" y="467.0" width="3.8" height="1.5" fill="#0865c8"/>
<rect x="1537.2" y="467.0" width="3.8" height="1.5" fill="#0865c8"/>
<rect x="1542.0" y="465.0" width="3.8" height="3.5" fill="#0865c8"/>
<rect x="1556.0" y="465.0" width="3.8" height="3.5" fill="#0865c8"/>
<rect x="1560.6" y="464.2" width="3.8" height="4.3" fill="#0865c8"/>
<rect x="1565.4" y="460.0" width="3.8" height="8.5" fill="#0865c8"/>
<rect x="1570.1" y="465.0" width="3.8" height="3.5" fill="#0865c8"/>
<rect x="1574.4" y="465.0" width="3.8" height="3.5" fill="#0865c8"/>
<rect x="1587.9" y="463.1" width="3.8" height="5.4" fill="#0865c8"/>
<rect x="1593.5" y="467.0" width="3.8" height="1.5" fill="#0865c8"/>
<rect x="1597.7" y="415.8" width="3.8" height="52.7" fill="#0865c8"/>
<rect x="1602.0" y="361.7" width="3.8" height="106.8" fill="#0865c8"/>
<rect x="1607.0" y="450.1" width="3.8" height="18.4" fill="#0865c8"/>
<rect x="1620.8" y="451.0" width="3.8" height="17.5" fill="#0865c8"/>
<rect x="1625.9" y="462.3" width="3.8" height="6.2" fill="#0865c8"/>
<rect x="1630.7" y="463.1" width="3.8" height="5.4" fill="#0865c8"/>
<rect x="1635.0" y="460.0" width="3.8" height="8.5" fill="#0865c8"/>
<rect x="1640.0" y="451.0" width="3.8" height="17.5" fill="#0865c8"/>
<rect x="1653.5" y="444.8" width="3.8" height="23.7" fill="#0865c8"/>
<rect x="1658.9" y="455.2" width="3.8" height="13.3" fill="#0865c8"/>
<rect x="1663.4" y="460.0" width="3.8" height="8.5" fill="#0865c8"/>
<rect x="1668.2" y="458.9" width="3.8" height="9.6" fill="#0865c8"/>
<rect x="1673.0" y="460.0" width="3.8" height="8.5" fill="#0865c8"/>
<rect x="1686.5" y="460.8" width="3.8" height="7.7" fill="#0865c8"/>
<rect x="1691.5" y="460.8" width="3.8" height="7.7" fill="#0865c8"/>
<rect x="1696.3" y="464.2" width="3.8" height="4.3" fill="#0865c8"/>
<rect x="1701.1" y="460.8" width="3.8" height="7.7" fill="#0865c8"/>
<rect x="1705.6" y="465.0" width="3.8" height="3.5" fill="#0865c8"/>
<rect x="1718.9" y="464.2" width="3.8" height="4.3" fill="#0865c8"/>
<rect x="1723.7" y="464.2" width="3.8" height="4.3" fill="#0865c8"/>
<rect x="1728.7" y="444.8" width="3.8" height="23.7" fill="#0865c8"/>
<rect x="1733.8" y="439.2" width="3.8" height="29.3" fill="#0865c8"/>
<rect x="1737.7" y="413.0" width="3.8" height="55.5" fill="#0865c8"/>
<polyline points="1406.0,468.2 1431.5,467.5 1437.2,460.8 1442.8,458.6 1461.1,453.8 1471.0,451.3 1480.8,450.1 1492.1,449.6 1506.2,448.2 1531.5,447.3 1561.1,447.3 1565.4,451.8 1573.8,455.2 1587.9,458.6 1594.9,461.7 1599.2,460.3 1604.8,455.8 1621.7,454.6 1635.8,455.8 1649.9,453.8 1669.6,452.1 1692.1,451.8 1724.5,451.8 1731.5,453.8 1735.8,456.6 1740.0,455.2" fill="none" stroke="#f00000" stroke-width="1.45" stroke-linejoin="round" stroke-linecap="butt" />
<rect x="834.50" y="348.50" width="951.00" height="120.00" fill="none" stroke="#00ff00" stroke-width="1.11"/>
<line x1="867.50" y1="637.50" x2="867.50" y2="642.36" stroke="#00ff00" stroke-width="1.11"/>
<text x="867.50" y="657.50" font-family="'Liberation Sans', sans-serif" font-size="14.2" fill="#00ff00" text-anchor="middle" textLength="43.60" lengthAdjust="spacingAndGlyphs">20260</text>
<line x1="977.50" y1="637.50" x2="977.50" y2="642.36" stroke="#00ff00" stroke-width="1.11"/>
<text x="977.50" y="657.50" font-family="'Liberation Sans', sans-serif" font-size="14.2" fill="#00ff00" text-anchor="middle" textLength="43.60" lengthAdjust="spacingAndGlyphs">20280</text>
<line x1="1086.50" y1="637.50" x2="1086.50" y2="642.36" stroke="#00ff00" stroke-width="1.11"/>
<text x="1086.50" y="657.50" font-family="'Liberation Sans', sans-serif" font-size="14.2" fill="#00ff00" text-anchor="middle" textLength="43.60" lengthAdjust="spacingAndGlyphs">20300</text>
<line x1="1196.50" y1="637.50" x2="1196.50" y2="642.36" stroke="#00ff00" stroke-width="1.11"/>
<text x="1196.50" y="657.50" font-family="'Liberation Sans', sans-serif" font-size="14.2" fill="#00ff00" text-anchor="middle" textLength="43.60" lengthAdjust="spacingAndGlyphs">20320</text>
<line x1="1305.50" y1="637.50" x2="1305.50" y2="642.36" stroke="#00ff00" stroke-width="1.11"/>
<text x="1305.50" y="657.50" font-family="'Liberation Sans', sans-serif" font-size="14.2" fill="#00ff00" text-anchor="middle" textLength="43.60" lengthAdjust="spacingAndGlyphs">20340</text>
<line x1="1415.50" y1="637.50" x2="1415.50" y2="642.36" stroke="#00ff00" stroke-width="1.11"/>
<text x="1415.50" y="657.50" font-family="'Liberation Sans', sans-serif" font-size="14.2" fill="#00ff00" text-anchor="middle" textLength="43.60" lengthAdjust="spacingAndGlyphs">20360</text>
<line x1="1525.50" y1="637.50" x2="1525.50" y2="642.36" stroke="#00ff00" stroke-width="1.11"/>
<text x="1525.50" y="657.50" font-family="'Liberation Sans', sans-serif" font-size="14.2" fill="#00ff00" text-anchor="middle" textLength="43.60" lengthAdjust="spacingAndGlyphs">20380</text>
<line x1="1634.50" y1="637.50" x2="1634.50" y2="642.36" stroke="#00ff00" stroke-width="1.11"/>
<text x="1634.50" y="657.50" font-family="'Liberation Sans', sans-serif" font-size="14.2" fill="#00ff00" text-anchor="middle" textLength="43.60" lengthAdjust="spacingAndGlyphs">20400</text>
<line x1="1744.50" y1="637.50" x2="1744.50" y2="642.36" stroke="#00ff00" stroke-width="1.11"/>
<text x="1744.50" y="657.50" font-family="'Liberation Sans', sans-serif" font-size="14.2" fill="#00ff00" text-anchor="middle" textLength="43.60" lengthAdjust="spacingAndGlyphs">20420</text>
<line x1="829.64" y1="517.50" x2="834.50" y2="517.50" stroke="#00ff00" stroke-width="1.11"/>
<text x="823.00" y="522.50" font-family="'Liberation Sans', sans-serif" font-size="14.2" fill="#00ff00" text-anchor="end" textLength="26.16" lengthAdjust="spacingAndGlyphs">100</text>
<line x1="829.64" y1="547.50" x2="834.50" y2="547.50" stroke="#00ff00" stroke-width="1.11"/>
<text x="823.00" y="552.50" font-family="'Liberation Sans', sans-serif" font-size="14.2" fill="#00ff00" text-anchor="end" textLength="17.44" lengthAdjust="spacingAndGlyphs">75</text>
<line x1="829.64" y1="577.50" x2="834.50" y2="577.50" stroke="#00ff00" stroke-width="1.11"/>
<text x="823.00" y="582.50" font-family="'Liberation Sans', sans-serif" font-size="14.2" fill="#00ff00" text-anchor="end" textLength="17.44" lengthAdjust="spacingAndGlyphs">50</text>
<line x1="829.64" y1="607.50" x2="834.50" y2="607.50" stroke="#00ff00" stroke-width="1.11"/>
<text x="823.00" y="612.50" font-family="'Liberation Sans', sans-serif" font-size="14.2" fill="#00ff00" text-anchor="end" textLength="17.44" lengthAdjust="spacingAndGlyphs">25</text>
<line x1="829.64" y1="637.50" x2="834.50" y2="637.50" stroke="#00ff00" stroke-width="1.11"/>
<text x="823.00" y="642.50" font-family="'Liberation Sans', sans-serif" font-size="14.2" fill="#00ff00" text-anchor="end" textLength="8.72" lengthAdjust="spacingAndGlyphs">0</text>
<text x="1309.75" y="507.90" font-family="'Liberation Sans', sans-serif" font-size="17.4" fill="#00ff00" text-anchor="middle" textLength="27.5" lengthAdjust="spacingAndGlyphs">RSI</text>
<line x1="834.0" y1="552.9" x2="1785.5" y2="552.9" stroke="#ff0000" stroke-opacity="0.7" stroke-width="2.08" stroke-dasharray="7.71 3.33"/>
<line x1="834.0" y1="601.0" x2="1785.5" y2="601.0" stroke="#008000" stroke-opacity="0.7" stroke-width="2.08" stroke-dasharray="7.71 3.33"/>
<clipPath id="ax3"><rect x="834" y="516.6" width="951.5" height="120.6"/></clipPath>
<g clip-path="url(#ax3)">
<polyline points="1240.9,500.0 1243.5,517.8 1259.9,637.4 1261.5,650.0" fill="none" stroke="#800080" stroke-width="1.45" stroke-linejoin="round" stroke-linecap="butt" />
<polyline points="1340.0,650.0 1346.9,637.4 1359.0,620.7 1375.0,611.0 1386.2,592.3 1396.8,598.0 1413.4,588.4 1418.3,587.7 1424.3,589.2 1429.8,587.2 1436.2,588.3 1451.3,589.8 1458.9,592.3 1462.8,593.5 1467.9,591.4 1490.6,594.4 1496.1,596.8 1505.7,597.7 1511.8,599.8 1528.4,599.5 1542.1,601.3 1557.2,602.6 1572.3,604.4 1577.8,585.9 1589.0,590.8 1604.1,592.3 1616.2,594.4 1626.8,598.0 1644.9,594.7 1654.0,595.3 1661.6,597.7 1681.2,599.5 1685.8,602.0 1704.0,604.4 1719.1,604.4 1726.0,605.9 1736.3,611.9 1742.4,598.0" fill="none" stroke="#800080" stroke-width="1.45" stroke-linejoin="round" stroke-linecap="butt" />
</g>
<rect x="834.50" y="517.50" width="951.00" height="120.00" fill="none" stroke="#00ff00" stroke-width="1.11"/>
<line x1="945.50" y1="806.50" x2="945.50" y2="811.36" stroke="#00ff00" stroke-width="1.11"/>
<text x="945.50" y="826.50" font-family="'Liberation Sans', sans-serif" font-size="14.2" fill="#00ff00" text-anchor="middle" textLength="43.60" lengthAdjust="spacingAndGlyphs">20300</text>
<line x1="1078.50" y1="806.50" x2="1078.50" y2="811.36" stroke="#00ff00" stroke-width="1.11"/>
<text x="1078.50" y="826.50" font-family="'Liberation Sans', sans-serif" font-size="14.2" fill="#00ff00" text-anchor="middle" textLength="43.60" lengthAdjust="spacingAndGlyphs">20320</text>
<line x1="1211.50" y1="806.50" x2="1211.50" y2="811.36" stroke="#00ff00" stroke-width="1.11"/>
<text x="1211.50" y="826.50" font-family="'Liberation Sans', sans-serif" font-size="14.2" fill="#00ff00" text-anchor="middle" textLength="43.60" lengthAdjust="spacingAndGlyphs">20340</text>
<line x1="1344.50" y1="806.50" x2="1344.50" y2="811.36" stroke="#00ff00" stroke-width="1.11"/>
<text x="1344.50" y="826.50" font-family="'Liberation Sans', sans-serif" font-size="14.2" fill="#00ff00" text-anchor="middle" textLength="43.60" lengthAdjust="spacingAndGlyphs">20360</text>
<line x1="1477.50" y1="806.50" x2="1477.50" y2="811.36" stroke="#00ff00" stroke-width="1.11"/>
<text x="1477.50" y="826.50" font-family="'Liberation Sans', sans-serif" font-size="14.2" fill="#00ff00" text-anchor="middle" textLength="43.60" lengthAdjust="spacingAndGlyphs">20380</text>
<line x1="1611.50" y1="806.50" x2="1611.50" y2="811.36" stroke="#00ff00" stroke-width="1.11"/>
<text x="1611.50" y="826.50" font-family="'Liberation Sans', sans-serif" font-size="14.2" fill="#00ff00" text-anchor="middle" textLength="43.60" lengthAdjust="spacingAndGlyphs">20400</text>
<line x1="1744.50" y1="806.50" x2="1744.50" y2="811.36" stroke="#00ff00" stroke-width="1.11"/>
<text x="1744.50" y="826.50" font-family="'Liberation Sans', sans-serif" font-size="14.2" fill="#00ff00" text-anchor="middle" textLength="43.60" lengthAdjust="spacingAndGlyphs">20420</text>
<line x1="829.64" y1="691.50" x2="834.50" y2="691.50" stroke="#00ff00" stroke-width="1.11"/>
<text x="823.00" y="696.50" font-family="'Liberation Sans', sans-serif" font-size="14.2" fill="#00ff00" text-anchor="end" textLength="8.72" lengthAdjust="spacingAndGlyphs">0</text>
<line x1="829.64" y1="734.50" x2="834.50" y2="734.50" stroke="#00ff00" stroke-width="1.11"/>
<text x="823.00" y="739.50" font-family="'Liberation Sans', sans-serif" font-size="14.2" fill="#00ff00" text-anchor="end" textLength="44.58" lengthAdjust="spacingAndGlyphs">−1000</text>
<line x1="829.64" y1="776.50" x2="834.50" y2="776.50" stroke="#00ff00" stroke-width="1.11"/>
<text x="823.00" y="781.50" font-family="'Liberation Sans', sans-serif" font-size="14.2" fill="#00ff00" text-anchor="end" textLength="44.58" lengthAdjust="spacingAndGlyphs">−2000</text>
<text x="1309.75" y="676.90" font-family="'Liberation Sans', sans-serif" font-size="17.4" fill="#00ff00" text-anchor="middle" textLength="49" lengthAdjust="spacingAndGlyphs">MACD</text>
<polyline points="875.9,691.2 1136.7,691.2 1156.4,722.6 1162.4,746.2 1168.5,764.4 1176.0,778.9 1189.6,784.1 1202.4,788.6 1209.3,794.6 1222.9,799.8 1235.0,800.7 1248.6,799.8 1262.3,794.6 1274.4,784.7 1295.6,776.5 1310.6,759.8 1322.7,750.2 1342.4,744.1 1354.5,734.1 1369.6,725.1 1387.7,722.6 1415.0,715.4 1457.3,713.0 1511.8,709.9 1534.5,709.3 1554.2,705.4 1602.6,703.3 1648.0,701.8 1742.4,701.1" fill="none" stroke="#0000ff" stroke-width="1.45" stroke-linejoin="round" stroke-linecap="butt" />
<polyline points="875.9,691.2 1136.7,691.2 1156.4,697.2 1163.9,708.4 1176.0,731.1 1202.4,742.3 1213.9,758.3 1229.0,775.9 1248.6,781.0 1256.2,784.1 1268.3,786.5 1295.6,784.7 1307.7,777.4 1322.7,768.3 1342.4,763.8 1369.6,744.1 1387.7,740.2 1415.0,726.6 1436.2,724.1 1460.4,717.5 1484.6,716.0 1508.8,713.0 1534.5,712.0 1557.2,708.4 1578.4,707.5 1602.6,705.4 1620.7,704.8 1648.0,703.0 1742.4,701.1" fill="none" stroke="#ff0000" stroke-width="1.45" stroke-linejoin="round" stroke-linecap="butt" />
<line x1="834.5" y1="691.2" x2="1785.5" y2="691.2" stroke="#ffffff" stroke-opacity="0.5" stroke-width="2.08"/>
<rect x="834.50" y="686.50" width="951.00" height="120.00" fill="none" stroke="#00ff00" stroke-width="1.11"/>
<rect x="840.5" y="693.5" width="93.0" height="46.0" rx="3" fill="#cccccc" stroke="#cccccc" stroke-width="1"/>
<line x1="845.0" y1="704.5" x2="874.8" y2="704.5" stroke="#0000ff" stroke-width="1.45" stroke-opacity="1"/>
<text x="885.6" y="709.5" font-family="'Liberation Sans', sans-serif" font-size="14.2" fill="#000" textLength="41" lengthAdjust="spacingAndGlyphs">MACD</text>
<line x1="845.0" y1="725.0" x2="874.8" y2="725.0" stroke="#ff0000" stroke-width="1.45" stroke-opacity="1"/>
<text x="886.5" y="730.0" font-family="'Liberation Sans', sans-serif" font-size="14.2" fill="#000" textLength="41" lengthAdjust="spacingAndGlyphs">Signal</text>
</svg></body></html>
